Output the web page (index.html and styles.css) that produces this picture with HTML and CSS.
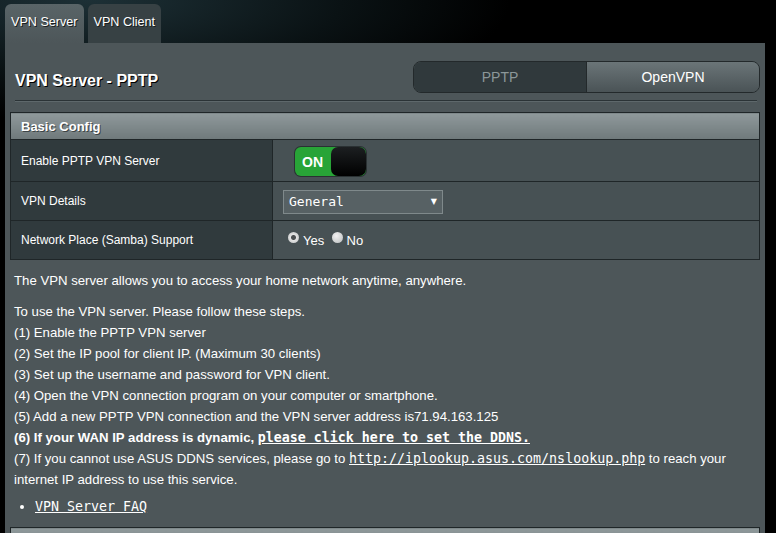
FILE: index.html
```html
<!DOCTYPE html>
<html lang="en">
<head>
  <meta charset="UTF-8">
  <title>VPN Server - PPTP</title>
  <link rel="stylesheet" href="styles.css">
</head>
<body>
  <div class="tabs">
    <div class="tab active">VPN Server</div>
    <div class="tab">VPN Client</div>
  </div>

  <div class="panel">
    <div class="panel-head">
      <h1 class="title">VPN Server - PPTP</h1>
      <div class="seg">
        <div class="seg-item selected">PPTP</div>
        <div class="seg-item">OpenVPN</div>
      </div>
    </div>
    <div class="divider"></div>

    <table class="config">
      <thead>
        <tr><th colspan="2">Basic Config</th></tr>
      </thead>
      <tbody>
        <tr class="row-tall">
          <th>Enable PPTP VPN Server</th>
          <td>
            <div class="switch">
              <span class="switch-on">ON</span>
              <span class="switch-knob"></span>
            </div>
          </td>
        </tr>
        <tr>
          <th>VPN Details</th>
          <td>
            <div class="select">
              <span>General</span>
              <span class="arrow">&#9660;</span>
            </div>
          </td>
        </tr>
        <tr>
          <th>Network Place (Samba) Support</th>
          <td>
            <label class="radio"><span class="dot checked"></span>Yes</label>
            <label class="radio"><span class="dot"></span>No</label>
          </td>
        </tr>
      </tbody>
    </table>

    <div class="notes">
      <p>The VPN server allows you to access your home network anytime, anywhere.</p>
      <p>
        To use the VPN server. Please follow these steps.<br>
        (1) Enable the PPTP VPN server<br>
        (2) Set the IP pool for client IP. (Maximum 30 clients)<br>
        (3) Set up the username and password for VPN client.<br>
        (4) Open the VPN connection program on your computer or smartphone.<br>
        (5) Add a new PPTP VPN connection and the VPN server address is71.94.163.125<br>
        <b>(6) If your WAN IP address is dynamic, <a class="mono" href="#">please click here to set the DDNS.</a></b><br>
        (7) If you cannot use ASUS DDNS services, please go to <a class="mono plain" href="#">http://iplookup.asus.com/nslookup.php</a> to reach your<br>
        internet IP address to use this service.
      </p>
      <ul>
        <li><a class="mono plain" href="#">VPN Server FAQ</a></li>
      </ul>
    </div>

    <table class="config">
      <thead>
        <tr><th colspan="2">&nbsp;</th></tr>
      </thead>
    </table>
  </div>
</body>
</html>
```

FILE: styles.css
```css
body {
  margin: 0;
  width: 776px;
  height: 533px;
  overflow: hidden;
  font-family: "Liberation Sans", Arial, sans-serif;
  color: #fff;
  background: radial-gradient(ellipse 420px 120px at 90px 0, #1d3036 0%, #0a1214 60%, #000 100%), #000;
}
.tabs {
  display: flex;
  gap: 4px;
  padding: 4px 0 0 5px;
}
.tab {
  height: 39px;
  box-sizing: border-box;
  padding: 11px 6px 0;
  font-size: 12.6px;
  color: #fff;
  text-shadow: 1px 1px 0 #1a1f21;
  background: #374144;
  border-radius: 6px 6px 0 0;
}
.tab.active {
  background: linear-gradient(#596467, #4d5659);
}
.panel {
  width: 760px;
  margin-left: 5px;
  height: 500px;
  background: #4d5659;
}
.panel-head {
  display: flex;
  justify-content: space-between;
  align-items: center;
  padding: 18px 5px 0 10px;
}
.title {
  margin: 8px 0 0;
  font-size: 16px;
  font-weight: bold;
  text-shadow: 1px 1px 0 #000;
}
.seg {
  display: flex;
  width: 347px;
  height: 32px;
  box-sizing: border-box;
  border: 1px solid #23292b;
  border-radius: 8px;
  overflow: hidden;
}
.seg-item {
  flex: 1;
  display: flex;
  align-items: center;
  justify-content: center;
  font-size: 14px;
  background: linear-gradient(#6b7578, #4a5356);
}
.seg-item.selected {
  background: #30393c;
  color: #8c9799;
  border-right: 1px solid #23292b;
}
.divider {
  margin: 7px 8px 0 10px;
  border-top: 1px solid #2b3336;
  border-bottom: 1px solid #5e686b;
}
.config {
  width: 750px;
  margin: 10px 5px 0;
  border-collapse: collapse;
  border: 1px solid #1f2628;
  font-size: 12px;
}
.config thead th {
  height: 26px;
  padding: 0 0 0 10px;
  text-align: left;
  font-size: 13px;
  font-weight: bold;
  text-shadow: 1px 1px 0 #3c4446;
  background: linear-gradient(#8f999b, #6f797b);
  border-bottom: 1px solid #1f2628;
}
.config tbody th {
  width: 251px;
  height: 38px;
  padding: 0 0 0 10px;
  text-align: left;
  font-weight: normal;
  background: #303a3d;
  border: 1px solid #1f2628;
}
.config tbody td {
  padding: 0 0 0 10px;
  background: #475154;
  border: 1px solid #1f2628;
}
.config .row-tall th {
  height: 41px;
}
.switch {
  position: relative;
  width: 71px;
  height: 29px;
  margin-left: 12px;
  margin-top: 2px;
  border-radius: 6px;
  background: #28a437;
  box-shadow: 0 0 0 1px #2a3133;
}
.switch-on {
  position: absolute;
  left: 7px;
  top: 7px;
  font-size: 14px;
  font-weight: bold;
  color: #fff;
}
.switch-knob {
  position: absolute;
  right: 0;
  top: 0;
  width: 35px;
  height: 29px;
  border-radius: 7px;
  background: linear-gradient(#1c1f21, #000);
}
.select {
  display: flex;
  justify-content: space-between;
  align-items: center;
  width: 160px;
  height: 24px;
  box-sizing: border-box;
  padding: 0 5px;
  margin-top: 1px;
  border: 1px solid #7f898b;
  background: #576164;
  font-family: "DejaVu Sans Mono", monospace;
  font-size: 13px;
}
.arrow {
  font-family: "DejaVu Sans", sans-serif;
  font-size: 8px;
}
.radio {
  display: inline-flex;
  align-items: center;
  margin-left: 5px;
  font-size: 13px;
}
.radio + .radio {
  margin-left: 4px;
}
.dot {
  width: 11px;
  height: 11px;
  margin-right: 4px;
  margin-top: -5px;
  border-radius: 50%;
  background: radial-gradient(circle at 40% 35%, #f2f2f2, #b9bcbd);
}
.dot.checked {
  background: radial-gradient(circle, #4b4f51 0 2px, #e4e4e4 3px, #b9bcbd);
}
.notes {
  padding: 0 9px;
  font-size: 13.2px;
  line-height: 21px;
}
.notes p {
  margin: 10px 0 0;
}
.notes ul {
  margin: 6px 0 0;
  padding-left: 21px;
}
.mono {
  font-family: "DejaVu Sans Mono", monospace;
  font-size: 13.3px;
  line-height: 1;
  color: #fff;
  text-decoration: underline;
}
.mono.plain {
  font-weight: normal;
}
```
